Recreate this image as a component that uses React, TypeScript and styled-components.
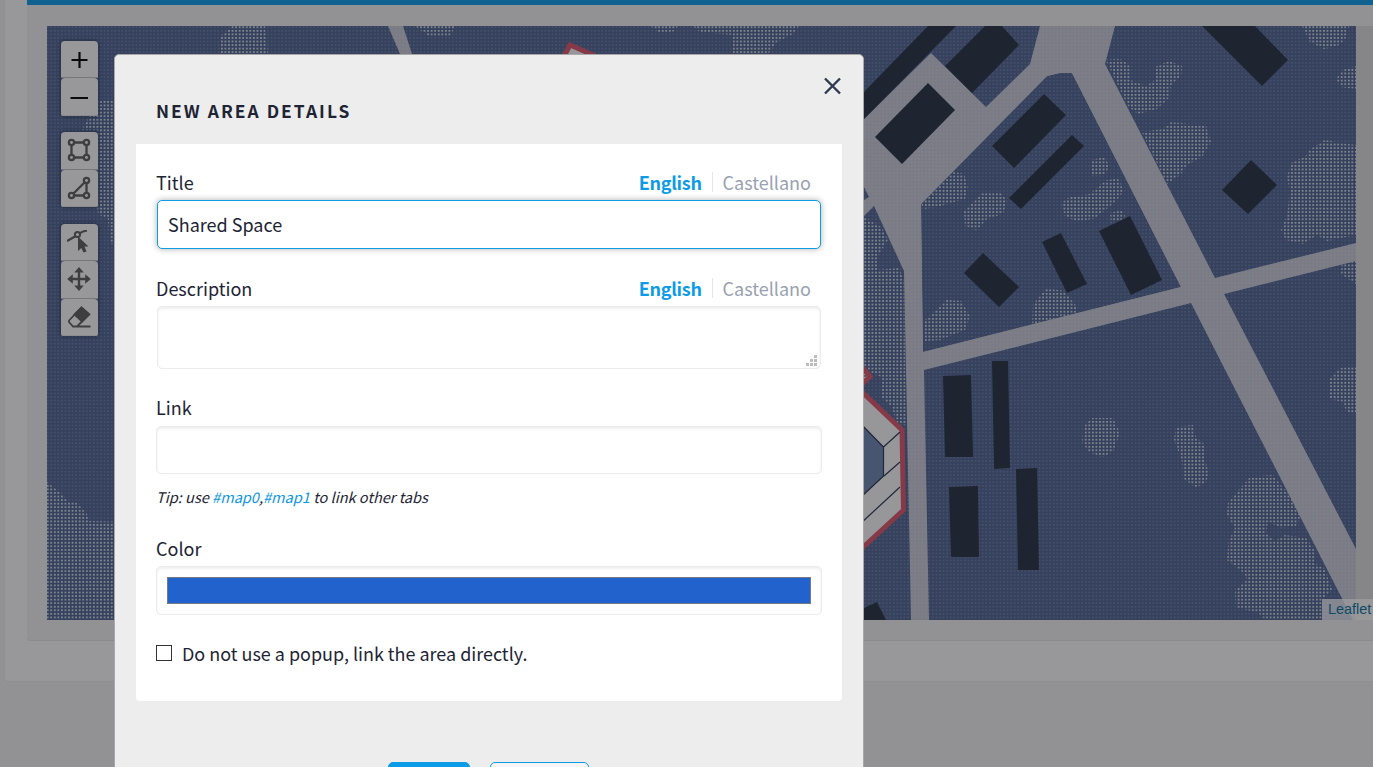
import React from 'react';
import styled, { createGlobalStyle, css } from 'styled-components';

const GlobalStyle = createGlobalStyle`
  *, *::before, *::after { box-sizing: border-box; }
  html, body { margin: 0; height: 100%; overflow: hidden; background: #929294; }
  body { font-family: "Noto Sans CJK SC", "Noto Sans", sans-serif; color: #1e2434; }
  #root { height: 100%; }
  button, input, textarea { font: inherit; color: inherit; margin: 0; padding: 0; }
`;

const Page = styled.div`
  position: relative;
  height: 767px;
  padding-left: 4px;
  overflow: hidden;
`;

const Card = styled.section`
  height: 682px;
  padding-left: 22px;
  background: #98989a;
  border-left: 1px solid #8f8f91;
  border-bottom: 1px solid #8f8f91;
  border-bottom-left-radius: 4px;
`;

const Panel = styled.div`
  height: 641px;
  padding: 21px 0 0 20px;
  background: #929294;
  border-top: 5px solid #0f6190;
  border-bottom: 1px solid #8b8b8d;
  border-bottom-left-radius: 4px;
`;

const MapFrame = styled.div`
  position: relative;
  height: 594px;
  background: #868688;
`;

const MapSvg = styled.svg`
  display: block;
  width: 1309px;
  height: 594px;
`;

const Attribution = styled.div`
  position: absolute;
  right: 0;
  bottom: 0;
  height: 21px;
  width: 51px;
  padding-left: 6px;
  font: 14.4px/20px "Liberation Sans", Arial, sans-serif;
  color: #0e4a68;
  background: rgba(157, 157, 159, 0.75);
`;

const Tools = styled.div`
  position: absolute;
  left: 14px;
  top: 15px;
  width: 37px;
  display: flex;
  flex-direction: column;
`;

const ToolGroup = styled.div<{ $gap: number }>`
  display: flex;
  flex-direction: column;
  margin-bottom: ${p => p.$gap}px;
  border-radius: 4px;
  box-shadow: 0 0 4px rgba(10, 14, 24, 0.55);
`;

const Tool = styled.button<{ $h: number; $last?: boolean }>`
  display: flex;
  align-items: flex-start;
  justify-content: center;
  padding: 6px 1px 0 0;
  width: 37px;
  height: ${p => p.$h}px;
  background: #98989a;
  border: 0;
  border-bottom: 1px solid ${p => (p.$last ? '#8c8c8e' : '#777779')};
  border-radius: 4px 4px ${p => (p.$last ? '2px 2px' : '0 0')};
`;

const Modal = styled.div`
  position: absolute;
  left: 114px;
  top: 54px;
  width: 750px;
  height: 760px;
  padding: 0 21px;
  background: #ededed;
  border: 1px solid #a9a9aa;
  border-radius: 5px;
`;

const ModalHeader = styled.header`
  display: flex;
  justify-content: space-between;
  height: 89px;
  padding: 22px 0 0 20px;
`;

const Heading = styled.h2`
  margin: 19px 0 0;
  font-size: 17.4px;
  line-height: 30px;
  font-weight: 600;
  letter-spacing: 2.03px;
`;

const Close = styled.button`
  width: 19px;
  height: 19px;
  border: 0;
  background: none;
  svg { display: block; }
`;

const Form = styled.form`
  height: 557px;
  padding: 24px 20px 0;
  background: #fff;
  border-radius: 0 0 4px 4px;
`;

const Field = styled.div<{ $h: number }>`
  height: ${p => p.$h}px;
`;

const LabelRow = styled.div<{ $h?: number }>`
  display: flex;
  justify-content: space-between;
  height: ${p => p.$h ?? 32}px;
  padding-right: 11px;
  line-height: 28px;
  font-size: 18px;
`;

const Languages = styled.div`
  display: flex;
  height: 28px;
`;

const Language = styled.span<{ $active?: boolean }>`
  color: ${p => (p.$active ? '#0c9be6' : '#9aa1b1')};
  font-weight: ${p => (p.$active ? 700 : 400)};
  letter-spacing: ${p => (p.$active ? '-0.3px' : '0')};
`;

const Divider = styled.span`
  width: 1px;
  height: 20px;
  margin: 4px 10px 0;
  background: #e6e6e6;
`;

const box = css`
  display: block;
  width: 100%;
  background: #fff;
  border: 1px solid #ebebeb;
  border-radius: 5px;
  box-shadow: inset 0 2px 3px rgba(0, 0, 0, 0.07);
`;

const TextInput = styled.input<{ $focused?: boolean }>`
  ${box}
  height: 48px;
  font-size: 18px;
  padding: 0 10px 2px;
  outline: none;
  ${p => p.$focused && css`
    width: 664px;
    height: 49px;
    margin-left: 1px;
    border-color: #109ce4;
    box-shadow: 0 0 6px rgba(0, 0, 0, 0.32);
  `}
`;

const AreaWrap = styled.div`
  position: relative;
  width: 664px;
  margin-left: 1px;
`;

const TextArea = styled.textarea`
  ${box}
  height: 63px;
  resize: none;
`;

const Grip = styled.svg`
  position: absolute;
  right: 4px;
  bottom: 3px;
`;

const Tip = styled.p`
  margin: 10px 0 0;
  font-size: 14.57px;
  line-height: 26px;
  font-style: italic;
`;

const Anchor = styled.a`
  color: #0c97e2;
`;

const ColorBox = styled.div`
  ${box}
  height: 49px;
  padding: 10px;
`;

const Swatch = styled.div`
  height: 27px;
  background: #2262cd;
  border: 1px solid #777b83;
`;

const CheckRow = styled.label`
  display: flex;
  align-items: center;
  gap: 10px;
  height: 28px;
  font-size: 17.97px;
  white-space: nowrap;
`;

const CheckBox = styled.span`
  width: 16px;
  height: 16px;
  border: 1px solid #333;
  background: #fff;
`;

const Actions = styled.footer`
  display: flex;
  gap: 20px;
  padding: 61px 0 0 252px;
`;

const ActionButton = styled.button<{ $w: number; $primary?: boolean }>`
  width: ${p => p.$w}px;
  height: 44px;
  border: 1px solid #0c9be6;
  border-radius: 5px;
  background: ${p => (p.$primary ? '#0c9be6' : '#f5f5f5')};
`;

const roads = [
  '388,26 403,26 412,54 400,54',
  '1040,26 1115,26 1105,64 1215,278 1356,243 1356,261 1224,294 1356,549 1356,620 1353,620 1191,303 924,370 929,620 911,620 905,320 904,271 874,206 864,216 864,200 869,197 864,187 864,119 931,53 986,107 1030,64',
];

const innerBlock = '921,204 1047,76 1060,73 1072,73 1181,287 923,352';

const buildings = [
  '928,26 956,26 864,119 864,92',
  '985,26 1002,26 1019,45 972,93 945,66',
  '928,83 955,110 902,164 875,137',
  '1044,94 1066,115 1014,168 992,146',
  '1072,135 1084,146 1021,209 1009,198',
  '983,253 1019,287 999,307 964,273',
  '1061,233 1087,284 1067,293 1042,242',
  '1130,216 1162,280 1131,295 1099,231',
  '1202,26 1255,26 1288,60 1262,86',
  '1251,160 1277,185 1248,214 1222,190',
  '943,376 971,375 973,457 945,457',
  '992,361 1008,361 1010,468 994,469',
  '949,487 978,486 979,557 951,557',
  '1016,469 1037,468 1039,570 1018,570',
  '864,608 877,602 886,620 864,620',
];

const groves = [
  'M47 482 L62 494 L68 501 L78 503 L87 514 L89 521 L120 522 V620 H47Z',
  'M98 100 H116 V245 L110 243 L108 219 L98 214 L97 205 L98 130 H82 L90 115Z',
  'M232 26 H265 L268 54 H219 L220 37Z',
  'M415 26 H455 L450 37 H430Z',
  'M651 26 H678 L673 32 H658Z M693 26 H799 L793 34 L777 42 L768 54 H732 L733 35 L700 32Z',
  'M1302 26 H1349 L1345 40 L1337 46 L1324 49 L1310 42Z',
  'M1356 66 L1343 70 L1336 79 L1341 87 L1356 89Z',
  'M1106 60 L1120 59 L1130 65 L1130 80 L1146 86 L1155 80 L1155 67 L1169 61 L1182 66 L1181 76 L1171 85 L1169 98 L1157 109 L1138 114 L1128 106Z',
  'M1142 132 L1163 129 L1171 122 L1206 126 L1211 142 L1202 157 L1187 165 L1181 174 L1167 184Z',
  'M1356 145 L1340 143 L1325 140 L1309 150 L1306 156 L1291 163 L1287 177 L1290 192 L1287 215 L1281 230 L1286 240 L1303 244 L1317 235 L1327 241 L1345 237 L1356 235Z',
  'M1356 251 L1342 261 L1341 274 L1356 284Z',
  'M864 217 L881 227 L888 240 L878 256 L878 270 L899 268 L904 281 L906 425 L897 424 L892 407 L881 397 L882 377 L873 374 L864 366Z',
  'M1092 418 L1113 418 L1120 433 L1113 452 L1102 457 L1089 452 L1082 442 L1084 426Z',
  'M1176 427 L1193 425 L1196 438 L1204 444 L1205 460 L1209 474 L1205 484 L1195 487 L1184 479 L1182 461 L1174 440Z',
  'M1356 366 L1340 368 L1330 378 L1330 399 L1343 402 L1346 411 L1356 414Z',
  'M1250 477 L1273 475 L1282 487 L1295 499 L1301 515 L1296 526 L1280 528 L1268 521 L1266 533 L1275 541 L1285 535 L1306 538 L1316 552 L1314 563 L1325 569 L1332 590 L1322 600 V620 H1265 L1258 612 L1236 608 L1235 590 L1247 580 L1244 573 L1227 560 L1229 540 L1235 528 L1227 515 L1228 503 L1238 491Z',
];

const innerGroves = [
  'M953 172 L964 174 L968 187 L965 199 L937 207 L923 209 L921 203Z',
  'M982 193 L1000 192 L1007 201 L1003 214 L987 219 L977 230 L965 226 L964 211Z',
  'M1092 160 L1105 157 L1109 166 L1105 175 L1092 176Z',
  'M1104 181 L1118 178 L1124 191 L1115 202 L1104 211 L1096 218 L1078 222 L1065 216 L1061 203 L1070 197 L1090 194Z',
  'M1110 213 L1122 210 L1126 218 L1111 223Z',
  'M1046 288 L1064 291 L1077 307 L1075 315 L1050 324 L1032 327 L1033 305Z',
  'M946 300 L961 301 L970 316 L965 330 L940 340 L925 341 L923 322 L933 313Z',
];

const paleGroves = [
  'M908 150 L932 148 L946 157 L950 172 L920 184 L907 172Z',
];

function SiteMap() {
  return (
    <MapSvg viewBox="47 26 1309 594">
      <defs>
        <pattern id="haze" x="46.8" y="26.4" width="3.555" height="3.555" patternUnits="userSpaceOnUse">
          <rect width="1.7" height="1.7" fill="#46526b" />
        </pattern>
        <pattern id="roadHaze" x="46.8" y="26.4" width="3.555" height="3.555" patternUnits="userSpaceOnUse">
          <rect width="1.8" height="1.8" fill="#888c94" opacity="0.35" />
        </pattern>
        <pattern id="leaves" x="46.8" y="26.4" width="3.555" height="3.555" patternUnits="userSpaceOnUse">
          <rect width="1.75" height="1.7" fill="#81868e" />
        </pattern>
        <clipPath id="block"><polygon points={innerBlock} /></clipPath>
      </defs>
      <rect x="47" y="26" width="1309" height="594" fill="#35415d" />
      <rect x="47" y="26" width="1309" height="594" fill="url(#haze)" />
      {groves.map(d => <path key={d} d={d} fill="url(#leaves)" />)}
      {roads.map(p => <polygon key={p} points={p} fill="#7a7b84" />)}
      {roads.map(p => <polygon key={p} points={p} fill="url(#roadHaze)" />)}
      {paleGroves.map(d => <path key={d} d={d} fill="url(#leaves)" opacity="0.5" />)}
      <g clipPath="url(#block)">
        <polygon points={innerBlock} fill="#35415d" />
        <polygon points={innerBlock} fill="url(#haze)" />
        {innerGroves.map(d => <path key={d} d={d} fill="url(#leaves)" />)}
      </g>
      {buildings.map(p => <polygon key={p} points={p} fill="#1f2431" />)}
      <g stroke="#863a48" strokeWidth="5">
        <polygon points="563,58 570,45 600,58" fill="#97979a" />
        <path d="M861 366 L870 376.500 L861 385" fill="#97979a" />
        <path d="M860 390 L902 430 L903.500 510 L860 550" fill="#97979a" />
      </g>
      <path d="M860 423 L883.500 447 L884 476 L860 498" fill="#485570" />
      <path d="M860 423 L883.500 447 V476 L860 498 M883.500 447 L900 432 M884 476 L900 462 M860 524 L900 487 M862 376 H866" fill="none" stroke="#22283a" strokeWidth="1.2" />
    </MapSvg>
  );
}

const PlusIcon = () => (
  <svg width="24" height="24" viewBox="0 0 24 24"><path d="M4.500 13h16M12.500 5v16" stroke="#0a0a0c" strokeWidth="2.200" /></svg>
);
const MinusIcon = () => (
  <svg width="24" height="24" viewBox="0 0 24 24"><path d="M3.500 14h17.500" stroke="#0a0a0c" strokeWidth="2" /></svg>
);
const RectangleIcon = () => (
  <svg width="24" height="24" viewBox="0 0 24 24" fill="none" stroke="#3e3e41" strokeWidth="2.300">
    <path d="M7 4.500h10M7 19.500h10M4.500 7v10M19.500 7v10" />
    <circle cx="4.500" cy="4.500" r="2.600" /><circle cx="19.500" cy="4.500" r="2.600" />
    <circle cx="4.500" cy="19.500" r="2.600" /><circle cx="19.500" cy="19.500" r="2.600" />
  </svg>
);
const PolygonIcon = () => (
  <svg width="24" height="24" viewBox="0 0 24 24" fill="none" stroke="#3e3e41" strokeWidth="2.300">
    <path d="M6.500 17.500L17.500 6.500M7 19.500h10M19.500 7v10" />
    <circle cx="19.500" cy="4.500" r="2.600" />
    <circle cx="4.500" cy="19.500" r="2.600" /><circle cx="19.500" cy="19.500" r="2.600" />
  </svg>
);
const EditIcon = () => (
  <svg width="24" height="24" viewBox="0 0 24 24" fill="none" stroke="#3e3e41">
    <path d="M0 11L8 6.500" strokeWidth="2.300" />
    <path d="M12.500 3.500C15 1.500 17 .8 20 .5" strokeWidth="1.800" />
    <circle cx="10.500" cy="4.500" r="2.600" strokeWidth="2" />
    <path d="M11 6.500V21L14.300 18L16.500 22.500L19.500 21.500L17.500 16.600H21.500Z" fill="#3e3e41" stroke="none" />
  </svg>
);
const MoveIcon = () => (
  <svg width="24" height="24" viewBox="0 0 24 24" fill="#3e3e41">
    <path d="M12 0L16.800 5.500H13.200V10.800H18.200V7.200L23.800 12L18.200 16.800V13.200H13.200V18.500H16.800L12 24L7.200 18.500H10.800V13.200H5.800V16.800L.2 12L5.800 7.200V10.800H10.800V5.500H7.200Z" />
  </svg>
);
const EraserIcon = () => (
  <svg width="24" height="24" viewBox="0 0 24 24" fill="none" stroke="#3e3e41" strokeWidth="1.800">
    <path d="M2 15.500L14.500 2.500L22 9.500L10 21.500H6L2 17Z M23.500 21.500H6" />
    <path d="M7.500 9.500L14.500 2.500L22.300 9.300L15 16.500Z" fill="#3e3e41" />
  </svg>
);

function LanguageTabs() {
  return (
    <Languages>
      <Language $active>English</Language>
      <Divider />
      <Language>Castellano</Language>
    </Languages>
  );
}

export default function App() {
  return (
    <Page>
      <GlobalStyle />
      <Card>
        <Panel>
          <MapFrame>
            <SiteMap />
            <Tools>
              <ToolGroup $gap={16}>
                <Tool $h={37}><PlusIcon /></Tool>
                <Tool $h={38} $last><MinusIcon /></Tool>
              </ToolGroup>
              <ToolGroup $gap={17}>
                <Tool $h={38}><RectangleIcon /></Tool>
                <Tool $h={37} $last><PolygonIcon /></Tool>
              </ToolGroup>
              <ToolGroup $gap={0}>
                <Tool $h={37}><EditIcon /></Tool>
                <Tool $h={38}><MoveIcon /></Tool>
                <Tool $h={37} $last><EraserIcon /></Tool>
              </ToolGroup>
            </Tools>
            <Attribution>Leaflet</Attribution>
          </MapFrame>
        </Panel>
      </Card>
      <Modal>
        <ModalHeader>
          <Heading>NEW AREA DETAILS</Heading>
          <Close type="button" aria-label="Close">
            <svg width="19" height="19" viewBox="0 0 19 19"><path d="M2 1.500L17 16.500M17 1.500L2 16.500" stroke="#2f3a50" strokeWidth="2.400" /></svg>
          </Close>
        </ModalHeader>
        <Form>
          <Field $h={106}>
            <LabelRow>Title<LanguageTabs /></LabelRow>
            <TextInput $focused defaultValue="Shared Space" />
          </Field>
          <Field $h={119}>
            <LabelRow>Description<LanguageTabs /></LabelRow>
            <AreaWrap>
              <TextArea />
              <Grip width="11" height="11" fill="#bdbdbd">
                <path d="M8 0h3v3h-3zM4 4h3v3h-3zM8 4h3v3h-3zM0 8h3v3h-3zM4 8h3v3h-3zM8 8h3v3h-3z" />
              </Grip>
            </AreaWrap>
          </Field>
          <Field $h={141}>
            <LabelRow $h={33}>Link</LabelRow>
            <TextInput />
            <Tip>Tip: use <Anchor>#map0</Anchor>,<Anchor>#map1</Anchor> to link other tabs</Tip>
          </Field>
          <Field $h={105}>
            <LabelRow>Color</LabelRow>
            <ColorBox><Swatch /></ColorBox>
          </Field>
          <CheckRow><CheckBox />Do not use a popup, link the area directly.</CheckRow>
        </Form>
        <Actions>
          <ActionButton type="button" $w={82} $primary aria-label="Save" />
          <ActionButton type="button" $w={99} aria-label="Cancel" />
        </Actions>
      </Modal>
    </Page>
  );
}
